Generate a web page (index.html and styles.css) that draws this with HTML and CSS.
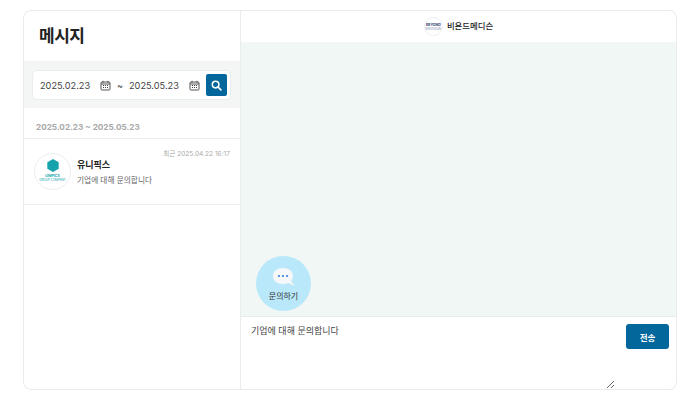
FILE: index.html
```html
<!DOCTYPE html>
<html lang="ko">
<head>
<meta charset="utf-8">
<title>메시지</title>
<link rel="stylesheet" href="styles.css">
</head>
<body>
<main class="card">
  <aside class="side">
    <h1 class="title">메시지</h1>
    <div class="band">
      <div class="range">
        <span class="date">2025.02.23</span>
        <svg class="cal" viewBox="0 0 11 11"><rect x="1" y="2" width="9" height="8" rx="1" fill="none" stroke="#555" stroke-width="1"/><path d="M3 .8v2M8 .8v2M1 4h9" stroke="#555" stroke-width="1"/><path d="M3 5.500h1M5 5.500h1M7 5.500h1M3 7.500h1M5 7.500h1M7 7.500h1" stroke="#444" stroke-width="1"/></svg>
        <span class="tilde">~</span>
        <span class="date">2025.05.23</span>
        <svg class="cal" viewBox="0 0 11 11"><rect x="1" y="2" width="9" height="8" rx="1" fill="none" stroke="#555" stroke-width="1"/><path d="M3 .8v2M8 .8v2M1 4h9" stroke="#555" stroke-width="1"/><path d="M3 5.500h1M5 5.500h1M7 5.500h1M3 7.500h1M5 7.500h1M7 7.500h1" stroke="#444" stroke-width="1"/></svg>
        <button class="search" aria-label="검색">
          <svg viewBox="0 0 12 12" width="11" height="11"><circle cx="5" cy="5" r="3.600" fill="none" stroke="#fff" stroke-width="1.700"/><path d="M7.800 7.800l3 3" stroke="#fff" stroke-width="1.800" stroke-linecap="round"/></svg>
        </button>
      </div>
    </div>
    <div class="period">2025.02.23 ~ 2025.05.23</div>
    <div class="item">
      <div class="logo">
        <svg class="hex" viewBox="0 0 14 16" width="12" height="13"><path d="M7 0l7 4v8l-7 4-7-4V4z" fill="#17a3ad"/></svg>
        <span class="logo-name">UNIPICS</span>
        <span class="logo-sub">GROUP COMPANY</span>
      </div>
      <div class="item-body">
        <div class="item-time">최근 2025.04.22 16:17</div>
        <div class="item-name">유니픽스</div>
        <div class="item-msg">기업에 대해 문의합니다</div>
      </div>
    </div>
  </aside>
  <section class="chat">
    <header class="chat-head">
      <div class="mini-logo"><span>BEYOND</span><span class="mini-sub">MEDISON</span></div>
      <span class="chat-name">비욘드메디슨</span>
    </header>
    <div class="thread">
      <div class="ask">
        <svg class="bubble" viewBox="0 0 24 22" width="24" height="22"><path d="M11 1c6 0 10 3 10 8 0 2-1 3.500-2 5l4 5-7-3c-2 .7-3.500 1-5 1C5 17 1 14 1 9s4-8 10-8z" fill="#f5f7f8"/><circle cx="7" cy="9" r="1.100" fill="#3b7fe0"/><circle cx="11" cy="9" r="1.100" fill="#3b7fe0"/><circle cx="15" cy="9" r="1.100" fill="#3b7fe0"/></svg>
        <span class="ask-label">문의하기</span>
      </div>
    </div>
    <div class="composer">
      <textarea class="input">기업에 대해 문의합니다</textarea>
      <button class="send">전송</button>
    </div>
  </section>
</main>
</body>
</html>
```

FILE: styles.css
```css
* { box-sizing: border-box; }
html, body { margin: 0; height: 100%; background: #fff; }
body {
  padding: 10px 23px;
  font-family: "Noto Sans CJK KR", "Inter", sans-serif;
  color: #222;
  overflow: hidden;
}
.card {
  width: 654px;
  height: 380px;
  display: flex;
  border: 1px solid #e9ecec;
  border-radius: 8px;
  overflow: hidden;
  background: #fff;
}
.side {
  width: 217px;
  flex: none;
  border-right: 1px solid #e9eeed;
  display: flex;
  flex-direction: column;
}
.title {
  margin: 0;
  height: 50px;
  padding-left: 15px;
  font-size: 17px;
  line-height: 48px;
  font-weight: 700;
  letter-spacing: -0.5px;
  color: #222;
}
.band {
  height: 47px;
  background: #f4f6f6;
  padding: 9px 9px 8px 8px;
}
.range {
  height: 30px;
  background: #fff;
  border: 1px solid #ebeded;
  border-radius: 5px;
  display: flex;
  align-items: center;
  padding: 0 3px 0 7px;
}
.date {
  font-family: "Inter", sans-serif;
  font-size: 9.200px;
  color: #444;
  width: 50px;
  flex: none;
  white-space: nowrap;
}
.cal { width: 11px; height: 11px; margin-left: 10px; flex: none; }
.tilde {
  font-family: "Inter", sans-serif;
  font-size: 9px;
  color: #444;
  width: 5px;
  flex: none;
  margin: 0 7px 0 6px;
}
.search {
  margin-left: 6px;
  width: 21px;
  height: 22px;
  flex: none;
  border: 0;
  border-radius: 2px;
  background: #04679c;
  padding: 0;
  display: flex;
  align-items: center;
  justify-content: center;
}
.period {
  height: 31px;
  padding: 13px 0 0 12px;
  font-family: "Inter", sans-serif;
  font-size: 8.200px;
  line-height: 12px;
  font-weight: 700;
  color: #a8a8a8;
  border-bottom: 1px solid #eceeee;
}
.item {
  height: 66px;
  border-bottom: 1px solid #eceeee;
  display: flex;
  padding: 14px 10px 0;
}
.logo {
  width: 37px;
  height: 37px;
  flex: none;
  border: 1px solid #eceeee;
  border-radius: 50%;
  display: flex;
  flex-direction: column;
  align-items: center;
  padding-top: 5px;
  overflow: hidden;
}
.hex { display: block; }
.logo-name { font-family: "Inter", sans-serif; font-size: 3.500px; font-weight: 700; color: #17a3ad; line-height: 5px; margin-top: 2px; }
.logo-sub { font-family: "Inter", sans-serif; font-size: 3px; color: #17a3ad; line-height: 3px; white-space: nowrap; }
.item-body { flex: 1; padding-left: 6px; min-width: 0; }
.item-time {
  font-size: 6.600px;
  line-height: 10px;
  color: #aaa;
  text-align: right;
  margin-top: -4px;
  height: 10px;
  font-family: "Inter", "Noto Sans CJK KR", sans-serif;
}
.item-name { font-size: 9px; font-weight: 700; line-height: 12px; color: #222; }
.item-msg { font-size: 7.700px; line-height: 12px; color: #666; margin-top: 3px; }
.chat { flex: 1; display: flex; flex-direction: column; min-width: 0; }
.chat-head {
  height: 31px;
  flex: none;
  display: flex;
  align-items: center;
  justify-content: center;
  gap: 4px;
}
.mini-logo {
  width: 19px;
  height: 19px;
  border: 1px solid #eef0f2;
  border-radius: 50%;
  display: flex;
  flex-direction: column;
  align-items: center;
  justify-content: center;
  font-family: "Inter", sans-serif;
  font-size: 3.500px;
  line-height: 4px;
  font-weight: 700;
  color: #2d3f6e;
  overflow: hidden;
}
.mini-sub { font-weight: 400; color: #8a93ad; }
.chat-name { font-size: 8.400px; font-weight: 500; color: #222; padding-bottom: 3px; }
.thread {
  flex: 1;
  background: #f0f7f4;
  border-bottom: 1px solid #e6ecea;
  display: flex;
  align-items: flex-end;
  padding: 0 0 5px 15px;
}
.ask {
  width: 55px;
  height: 55px;
  border-radius: 50%;
  background: #b8e8fa;
  display: flex;
  flex-direction: column;
  align-items: center;
  padding-top: 11px;
}
.bubble { display: block; }
.ask-label { font-size: 8px; line-height: 12px; color: #333; margin-top: 1px; }
.composer {
  height: 72px;
  flex: none;
  display: flex;
  padding: 7px 7px 0 10px;
  gap: 11px;
}
.input {
  flex: 1;
  height: 65px;
  border: 0;
  outline: 0;
  padding: 0;
  background: transparent;
  font-family: "Noto Sans CJK KR", sans-serif;
  font-size: 9px;
  line-height: 14px;
  color: #444;
}
.send {
  width: 43px;
  height: 25px;
  flex: none;
  border: 0;
  border-radius: 3px;
  background: #04679c;
  color: #fff;
  font-family: "Noto Sans CJK KR", sans-serif;
  font-size: 8.500px;
  font-weight: 700;
  padding: 0;
}
```
